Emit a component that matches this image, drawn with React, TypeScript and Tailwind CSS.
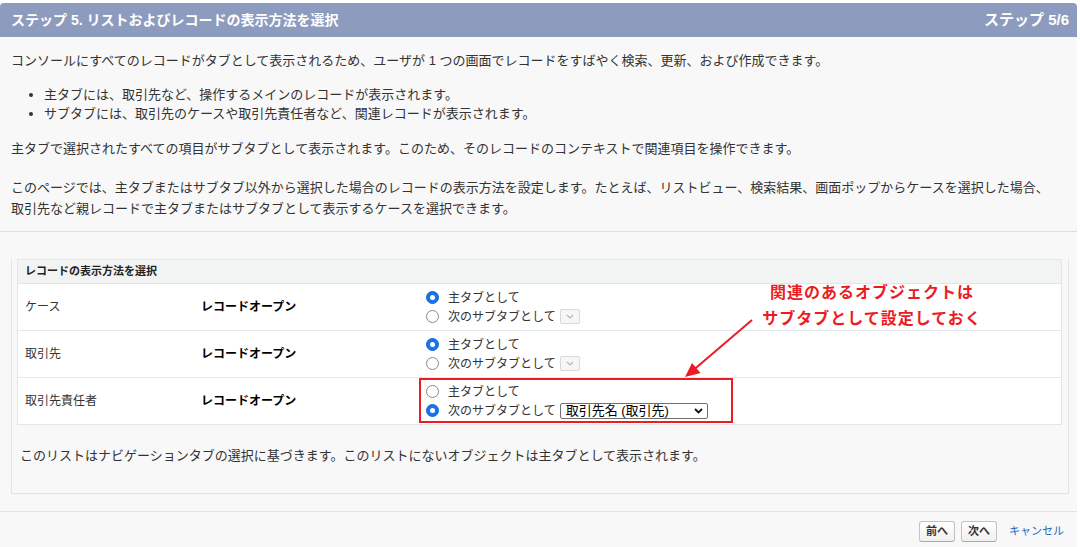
import React from "react";

function Radio({ checked }: { checked: boolean }) {
  return checked ? (
    <span className="inline-flex items-center justify-center w-[13px] h-[13px] rounded-full bg-[#1a73e8] border border-[#1565d6] shrink-0">
      <span className="w-[5px] h-[5px] rounded-full bg-white" />
    </span>
  ) : (
    <span className="inline-block w-[13px] h-[13px] rounded-full bg-white border border-[#8a8a8a] shrink-0" />
  );
}

function DisabledSelect() {
  return (
    <span className="inline-flex items-center justify-center w-[20px] h-[15px] border border-[#d9d9d9] rounded-[2px] bg-[#f6f6f6] ml-[4px]">
      <svg width="8" height="5" viewBox="0 0 8 5">
        <path d="M1 1 L4 4 L7 1" fill="none" stroke="#b5b5b5" strokeWidth="1.2" />
      </svg>
    </span>
  );
}

function ActiveSelect() {
  return (
    <span className="inline-flex items-center justify-between w-[148px] h-[16px] border border-[#6f6f6f] rounded-[2px] bg-white ml-[4px] pl-[5px] pr-[4px] text-[13px] leading-[14px] text-black">
      <span>取引先名 (取引先)</span>
      <svg width="9" height="6" viewBox="0 0 9 6">
        <path d="M1 1 L4.5 4.5 L8 1" fill="none" stroke="#111" strokeWidth="1.8" />
      </svg>
    </span>
  );
}

function Row({
  label,
  main,
  last,
  highlight,
}: {
  label: string;
  main: boolean;
  last?: boolean;
  highlight?: boolean;
}) {
  return (
    <div
      className={
        "flex h-[46px] box-content bg-white " + (last ? "" : "border-b border-[#e6e8ea]")
      }
    >
      <div className="w-[176px] pl-[7px] flex items-center text-[12px] text-[#333]">{label}</div>
      <div className="w-[225px] pl-[7px] flex items-center text-[12px] font-bold text-black">
        レコードオープン
      </div>
      <div className="relative flex-1 pl-[7px] flex flex-col justify-center text-[12px] text-[#333]">
        <div className="flex items-center h-[19px]">
          <Radio checked={main} />
          <span className="ml-[9px]">主タブとして</span>
        </div>
        <div className="flex items-center h-[19px]">
          <Radio checked={!main} />
          <span className="ml-[9px]">次のサブタブとして</span>
          {main ? <DisabledSelect /> : <ActiveSelect />}
        </div>
        {highlight && (
          <div className="absolute left-0 top-0 w-[314px] h-[45px] border-2 border-[#ec1c24]" />
        )}
      </div>
    </div>
  );
}

export default function App() {
  return (
    <div className="relative w-[1080px] h-[547px] bg-white pt-[3px] font-['Liberation_Sans','Noto_Sans_CJK_JP',sans-serif] overflow-hidden">
      <div className="w-[1077px] h-[544px] bg-[#f8f8f8] rounded-t-[4px] flex flex-col">
        <div className="h-[34px] bg-[#8d9cbe] rounded-t-[4px] px-[11px] flex items-center justify-between text-white font-bold text-[14px]">
          <span>ステップ 5. リストおよびレコードの表示方法を選択</span>
          <span className="mr-[-3px] text-[15px]">ステップ 5/6</span>
        </div>

        <div className="px-[11px] text-[13px] leading-[19px] text-[#333]">
          <p className="mt-[14px]">
            コンソールにすべてのレコードがタブとして表示されるため、ユーザが 1 つの画面でレコードをすばやく検索、更新、および作成できます。
          </p>
          <ul className="mt-[15px] pl-[33px] list-disc">
            <li>主タブには、取引先など、操作するメインのレコードが表示されます。</li>
            <li>サブタブには、取引先のケースや取引先責任者など、関連レコードが表示されます。</li>
          </ul>
          <p className="mt-[16px]">
            主タブで選択されたすべての項目がサブタブとして表示されます。このため、そのレコードのコンテキストで関連項目を操作できます。
          </p>
          <p className="mt-[19px] leading-[21px]">
            このページでは、主タブまたはサブタブ以外から選択した場合のレコードの表示方法を設定します。たとえば、リストビュー、検索結果、画面ポップからケースを選択した場合、
            <br />
            取引先など親レコードで主タブまたはサブタブとして表示するケースを選択できます。
          </p>
        </div>

        <div className="mt-[12px] border-t border-[#dedede]" />

        <div className="mt-[27px] ml-[11px] mr-[8px] border-l border-r border-b border-[#e3e3e3] pl-[5px] pr-[6px] pb-[28px]">
          <div className="border border-[#e3e5e7]">
            <div className="h-[23px] box-content bg-[#f2f3f3] border-b border-[#e3e5e7] pl-[7px] flex items-center text-[11px] font-bold text-[#222]">
              レコードの表示方法を選択
            </div>
            <Row label="ケース" main={true} />
            <Row label="取引先" main={true} />
            <Row label="取引先責任者" main={false} last highlight />
          </div>
          <p className="mt-[21px] pl-[3px] text-[13px] leading-[19px] text-[#333]">
            このリストはナビゲーションタブの選択に基づきます。このリストにないオブジェクトは主タブとして表示されます。
          </p>
        </div>

        <div className="mt-[17px] border-t border-[#e3e3e3]" />

        <div className="mt-[9px] pr-[13px] flex items-center justify-end gap-[6px]">
          <button className="h-[21px] px-[6px] border border-[#c3c3c3] border-b-[#a9a9a9] rounded-[3px] bg-gradient-to-b from-white to-[#f0f0f0] text-[11px] font-bold text-[#333] leading-[19px]">
            前へ
          </button>
          <button className="h-[21px] px-[6px] border border-[#c3c3c3] border-b-[#a9a9a9] rounded-[3px] bg-gradient-to-b from-white to-[#f0f0f0] text-[11px] font-bold text-[#333] leading-[19px]">
            次へ
          </button>
          <span className="ml-[6px] text-[11px] text-[#1b6ac9]">キャンセル</span>
        </div>
      </div>

      <div className="absolute left-[752px] top-[280px] w-[240px] text-center text-[16px] leading-[26px] font-bold tracking-[1px] text-[#ec1c24]">
        <div>関連のあるオブジェクトは</div>
        <div>サブタブとして設定しておく</div>
      </div>
      <svg className="absolute left-0 top-0 pointer-events-none" width="1080" height="547">
        <line x1="752" y1="320" x2="694" y2="369.5" stroke="#ec1c24" strokeWidth="2" />
        <polygon points="685,377 700.5,373 692,363" fill="#ec1c24" />
      </svg>
    </div>
  );
}
